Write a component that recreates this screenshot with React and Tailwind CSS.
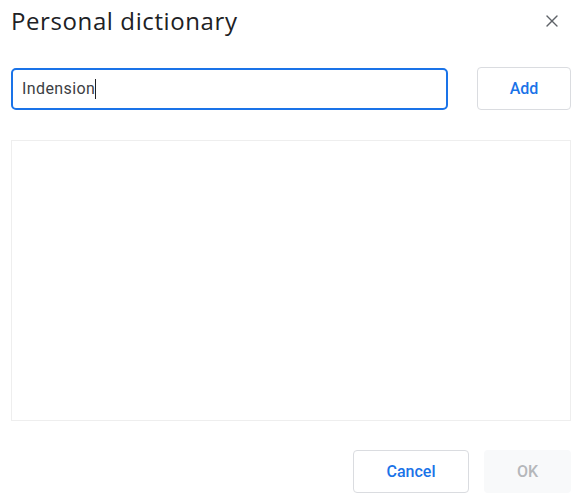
import { X } from 'lucide-react';

export default function App() {
  return (
    <div className="w-[582px] h-[500px] bg-white px-[11px] font-['Roboto',sans-serif] text-[#202124]">
      <div className="flex items-center justify-between h-[42px]">
        <h1 className="font-['Open_Sans',sans-serif] text-[24px] leading-none tracking-[0.6px]">Personal dictionary</h1>
        <button className="mr-[9px] text-[#5f6368]">
          <X className="w-[20px] h-[20px]" strokeWidth={1.6} />
        </button>
      </div>

      <div className="flex items-center gap-[29px] mt-[25px]">
        <div className="flex items-center w-[437px] h-[42px] rounded-[5px] border-2 border-[#1a73e8] pl-[9px] text-[16px] tracking-[0.4px] text-[#3c4043]">
          Indension<span className="w-px h-[20px] bg-[#202124]" />
        </div>
        <button className="w-[94px] h-[43px] rounded-[4px] border border-[#dadce0] text-[16px] font-medium text-[#1a73e8]">
          Add
        </button>
      </div>

      <div className="mt-[30px] h-[281px] border border-[#eeeeee]" />

      <div className="flex justify-end gap-[15px] mt-[29px]">
        <button className="w-[116px] h-[43px] rounded-[4px] border border-[#dadce0] text-[16px] font-medium text-[#1a73e8]">
          Cancel
        </button>
        <button className="w-[87px] h-[43px] rounded-[4px] bg-[#f8f9fa] text-[16px] font-medium text-[#b5b7ba]">
          OK
        </button>
      </div>
    </div>
  );
}
